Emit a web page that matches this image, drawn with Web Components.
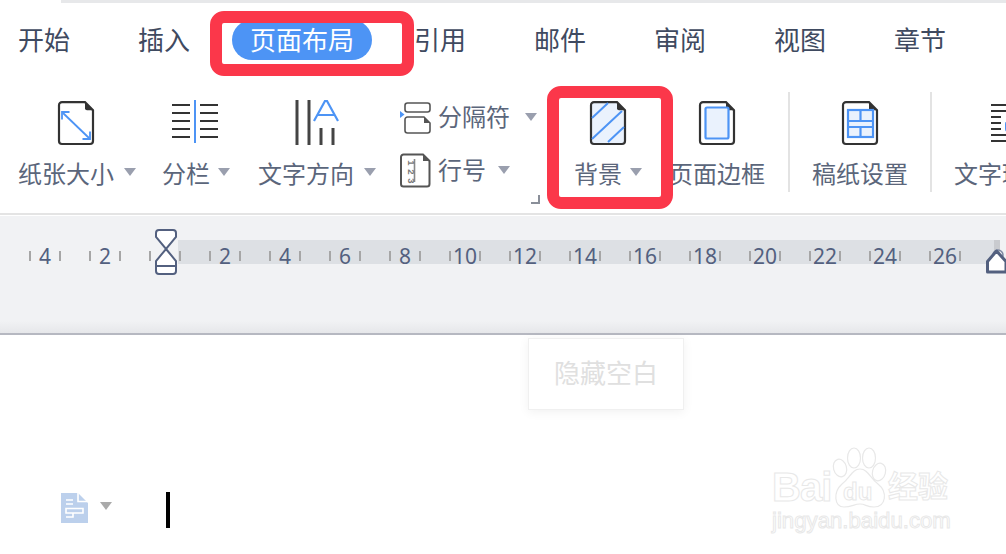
<!DOCTYPE html>
<html lang="zh">
<head>
<meta charset="utf-8">
<title>页面布局</title>
<style>
  html, body { margin: 0; background: #fff; }
  body { width: 1006px; height: 554px; overflow: hidden; position: relative; font-family: "Noto Sans CJK SC", "Noto Sans", sans-serif; }
</style>
</head>
<body>
<wps-app>
  <wps-tabs>
    <wps-tab>开始</wps-tab>
    <wps-tab>插入</wps-tab>
    <wps-tab active>页面布局</wps-tab>
    <wps-tab>引用</wps-tab>
    <wps-tab>邮件</wps-tab>
    <wps-tab>审阅</wps-tab>
    <wps-tab>视图</wps-tab>
    <wps-tab>章节</wps-tab>
  </wps-tabs>
  <wps-ribbon></wps-ribbon>
  <wps-ruler></wps-ruler>
  <wps-doc></wps-doc>
  <wps-mark style="left:210px;top:11px;width:204px;height:65px"></wps-mark>
  <wps-mark style="left:547px;top:86px;width:126px;height:123px"></wps-mark>
  <wps-watermark></wps-watermark>
</wps-app>

<script>
// icon paths, all drawn on the 36x44 sheet
const SHEET = `<path d="M4 1.2H27L35 9.2V40a3 3 0 0 1-3 3H4a3 3 0 0 1-3-3V4.2a3 3 0 0 1 3-3z" fill="FILL" stroke="#333" stroke-width="2.2"/><path d="M27 1.2L35 9.2H29a2 2 0 0 1-2-2z" fill="#333"/>`;
const page = (fill, inner) => `<svg width="38" height="46" viewBox="-1 -1 38 46">${SHEET.replace("FILL", fill)}${inner}</svg>`;
const digit = (n, y) => `<text transform="translate(4 ${y}) rotate(90)" font-size="9.500" text-anchor="middle" fill="#777" font-family="Liberation Sans" font-weight="700">${n}</text>`;

const ICONS = {
  size: page("#fff", `<g fill="none" stroke="#4d94f5" stroke-width="1.800"><path d="M5 12L31 37"/><path d="M4 18.500V11H11.500"/><path d="M32 30.500V38H24.500"/></g>`),
  cols: `<svg width="48" height="46" viewBox="0 0 48 46"><g stroke="#333" stroke-width="2"><path d="M1 5H19M1 13H19M1 21H19M1 29H19M1 37H19M29 5H47M29 13H47M29 21H47M29 29H47M29 37H47"/></g><path d="M24 0V43" stroke="#4d94f5" stroke-width="2"/></svg>`,
  dir: `<svg width="44" height="46" viewBox="0 0 44 46"><path d="M2 0V45M14 0V45M26 28V45M38 28V45" stroke="#444" stroke-width="3"/><path d="M19 21L30 1H32L43 21M22.500 15H39.500" fill="none" stroke="#4d94f5" stroke-width="2.200"/></svg>`,
  breaks: `<svg width="31" height="33" viewBox="0 0 31 33"><rect x="5" y="2" width="25" height="9" rx="2.500" fill="none" stroke="#555" stroke-width="1.600"/><path d="M7.500 16H24L30 22V29.500a2.500 2.500 0 0 1-2.500 2.500H7.500A2.500 2.500 0 0 1 5 29.500V18.500A2.500 2.500 0 0 1 7.500 16z" fill="none" stroke="#555" stroke-width="1.600"/><path d="M24 16L30 22H24z" fill="#555"/><path d="M0 10L4.500 13.500L0 17z" fill="#4d94f5"/></svg>`,
  lines: `<svg width="31" height="35" viewBox="0 0 31 35"><path d="M3.500 1.500H23L29.500 8V31a2.500 2.500 0 0 1-2.500 2.500H3.500A2.500 2.500 0 0 1 1 31V4A2.500 2.500 0 0 1 3.500 1.500z" fill="#fff" stroke="#555" stroke-width="2"/><path d="M23 1.500L29.500 8H23z" fill="#555"/><path d="M14.500 6V29" stroke="#888" stroke-width="1.600"/><g transform="translate(4 0)">${digit(1, 10)}${digit(2, 19)}${digit(3, 28)}</g></svg>`,
  bg: page("#eaf2fd", `<g stroke="#4d94f5" stroke-width="2" fill="none"><path d="M2 17L18 2M2 38L32 10M18 41L34 26"/></g>`),
  border: page("#fff", `<rect x="6.500" y="6.500" width="23" height="31" rx="1.500" fill="#eaf2fd" stroke="#4d94f5" stroke-width="2.200"/>`),
  grid: `<svg width="38" height="46" viewBox="-1 -1 38 46">${SHEET.replace("FILL", "#fff")}<rect x="6" y="9" width="25" height="27" fill="#eaf2fd" stroke="#4d94f5" stroke-width="2.200"/><path d="M6 20H31M6 26H31M18.500 9V20M18.500 26V36" stroke="#4d94f5" stroke-width="2.200"/></svg>`,
  wrap: `<svg width="36" height="46" viewBox="0 0 36 46"><path d="M7 5H36M7 11H36M7 17H17M7 23H17M7 29H17M7 35H36M7 41H36" stroke="#333" stroke-width="2"/><rect x="21" y="21" width="15" height="11" rx="3" fill="#4d94f5"/></svg>`,
};

class WpsApp extends HTMLElement {
  constructor() {
    super();
    this.attachShadow({ mode: "open" });
    this.shadowRoot.innerHTML = `
      <style>
        :host { display: flex; flex-direction: column; width: 1006px; height: 554px; position: relative; overflow: hidden; background: #fff; }
        .strip { height: 3px; margin-left: 61px; background: #e7e8ea; flex: none; }
      </style>
      <div class="strip"></div>
      <slot></slot>
    `;
  }
}

class WpsTabs extends HTMLElement {
  constructor() {
    super();
    this.attachShadow({ mode: "open" });
    this.shadowRoot.innerHTML = `
      <style>
        :host { display: flex; height: 74px; align-items: center; padding-left: 18px; flex: none; font-family: "Noto Sans CJK SC", sans-serif; }
      </style>
      <slot></slot>
    `;
  }
}

class WpsTab extends HTMLElement {
  constructor() {
    super();
    this.attachShadow({ mode: "open" });
    this.shadowRoot.innerHTML = `
      <style>
        :host { display: block; margin-right: 68px; font-size: 26px; line-height: 38px; padding-bottom: 2px; color: #3f4a60; white-space: nowrap; }
        :host([active]) { margin: 0 42px 0 -26px; padding: 0 18px 2px; border-radius: 20px; background: #4d94f5; color: #fff; }
      </style>
      <slot></slot>
    `;
  }
}

class WpsTool extends HTMLElement {
  constructor() {
    super();
    this.attachShadow({ mode: "open" });
    const caret = this.hasAttribute("caret") ? `<i></i>` : "";
    this.shadowRoot.innerHTML = `
      <style>
        :host { display: flex; flex-direction: column; align-items: flex-start; flex: none; }
        .icon { height: 46px; display: flex; justify-content: center; width: 100%; box-sizing: border-box; padding-right: var(--inset, 0); }
        .label { height: 30px; margin-top: 12px; display: flex; align-items: center; gap: var(--gap, 10px); font-size: 24px; line-height: 30px; color: #5b667b; white-space: nowrap; }
        i { width: 0; height: 0; border: 6px solid transparent; border-top: 8px solid #9a9fae; border-bottom: 0; margin-top: -3px; }
      </style>
      <div class="icon">${ICONS[this.getAttribute("icon")]}</div>
      <div class="label"><slot></slot>${caret}</div>
    `;
  }
}

class WpsSmallTool extends HTMLElement {
  constructor() {
    super();
    this.attachShadow({ mode: "open" });
    this.shadowRoot.innerHTML = `
      <style>
        :host { display: flex; align-items: center; font-size: 24px; color: #5b667b; white-space: nowrap; }
        .icon { width: 38px; display: flex; }
        span { line-height: 26px; padding-bottom: 4px; }
        i { width: 0; height: 0; border: 6px solid transparent; border-top: 8px solid #9a9fae; border-bottom: 0; margin: -1px 0 0 var(--caret-gap, 15px); }
      </style>
      <div class="icon">${ICONS[this.getAttribute("icon")]}</div>
      <span><slot></slot></span><i></i>
    `;
  }
}

class WpsRibbon extends HTMLElement {
  constructor() {
    super();
    this.attachShadow({ mode: "open" });
    this.shadowRoot.innerHTML = `
      <style>
        :host { display: flex; height: 136px; flex: none; padding: 23px 0 0 18px; box-sizing: border-box; overflow: hidden; position: relative; font-family: "Noto Sans CJK SC", sans-serif; }
        .stack { display: flex; flex-direction: column; gap: 19px; margin: 1px 0 0 24px; width: 137px; flex: none; }
        .sep { width: 2px; height: 100px; background: #e3e3e3; margin: -8px 22px 0 23px; flex: none; }
        .sep + wps-tool + .sep { margin-left: 22px; }
        .corner { position: absolute; left: 531px; top: 118px; width: 7px; height: 7px; border-right: 2px solid #8a8f99; border-bottom: 2px solid #8a8f99; }
      </style>
      <wps-tool icon="size" caret style="width:118px;--inset:2px">纸张大小</wps-tool>
      <wps-tool icon="cols" caret style="margin-left:26px;width:68px;--gap:8px;--inset:3px">分栏</wps-tool>
      <wps-tool icon="dir" caret style="margin-left:28px;width:118px">文字方向</wps-tool>
      <div class="stack">
        <wps-small-tool icon="breaks">分隔符</wps-small-tool>
        <wps-small-tool icon="lines" style="--caret-gap:12px">行号</wps-small-tool>
      </div>
      <wps-tool icon="bg" caret style="margin-left:37px;width:68px;--gap:8px">背景</wps-tool>
      <wps-tool icon="border" style="margin-left:27px;width:96px">页面边框</wps-tool>
      <div class="sep"></div>
      <wps-tool icon="grid" style="width:96px">稿纸设置</wps-tool>
      <div class="sep"></div>
      <wps-tool icon="wrap" style="width:96px">文字环绕</wps-tool>
      <div class="corner"></div>
    `;
  }
}

class WpsRuler extends HTMLElement {
  constructor() {
    super();
    this.attachShadow({ mode: "open" });
    const nums = [4, 2, "", 2, 4, 6, 8, 10, 12, 14, 16, 18, 20, 22, 24, 26];
    const cells = nums.map(n => `<div class="cell"><span>${n}</span></div>`).join("");
    this.shadowRoot.innerHTML = `
      <style>
        :host { display: block; height: 122px; flex: none; box-sizing: border-box; position: relative; overflow: hidden;
          border-top: 2px solid #e4e4e4; border-bottom: 2px solid #b6b8c1;
          background: linear-gradient(#fff 0 1px, #f1f2f4 1px, #f1f2f4 106px, #e6e7ea 118px); }
        .band { position: absolute; left: 178px; width: 816px; top: 25px; height: 24px; background: #dde0e4; border-right: 6px solid #c9cbcf; }
        .scale { position: absolute; left: 30px; top: 29px; display: flex; }
        .cell { width: 60px; flex: none; }
        .cell span { display: block; width: 30px; height: 24px; text-align: center; font: 21px/24px "Noto Sans", sans-serif; color: #53607f; position: relative; white-space: nowrap; }
        .cell span::before, .cell span::after { content: ""; position: absolute; top: 7px; width: 2px; height: 10px; background: #a6a6a6; }
        .cell span::before { left: -1px; }
        .cell span::after { right: -1px; }
        svg { position: absolute; }
      </style>
      <div class="band"></div>
      <div class="scale">${cells}</div>
      <svg style="left:154px;top:13px" width="24" height="48" viewBox="0 0 24 48" fill="none" stroke="#53607f" stroke-width="2">
        <path d="M5 2H19a3 3 0 0 1 3 3V9L12 21L2 9V5a3 3 0 0 1 3-3z" fill="#fff"/>
        <path d="M12 21L22 33V43a3 3 0 0 1-3 3H5a3 3 0 0 1-3-3V33z" fill="#fff"/>
        <path d="M2 38H22"/>
      </svg>
      <svg style="left:984px;top:28px" width="24" height="32" viewBox="0 0 24 32" fill="#fff" stroke="#53607f">
        <circle cx="14" cy="12" r="5" fill="none" stroke-width="1.500" stroke="#7d89a3"/>
        <path d="M12.500 8L22 18.500V29H3.500V18.500z" stroke-width="3" stroke-linejoin="round"/>
      </svg>
    `;
  }
}

class WpsDoc extends HTMLElement {
  constructor() {
    super();
    this.attachShadow({ mode: "open" });
    this.shadowRoot.innerHTML = `
      <style>
        :host { display: flex; align-items: flex-start; padding: 158px 0 0 61px; flex: 1; }
        .caret { width: 0; height: 0; border: 6px solid transparent; border-top: 8px solid #aaa; border-bottom: 0; margin: 9px 0 0 12px; }
        .cursor { width: 4px; height: 36px; background: #000; margin: -1px 0 0 54px; }
        .tip { position: absolute; left: 528px; top: 338px; width: 156px; height: 72px; box-sizing: border-box; background: #fff; padding-bottom: 4px;
          border: 1px solid #f0f0f0; box-shadow: 0 2px 10px rgba(0,0,0,.06); display: flex; align-items: center; justify-content: center;
          font: 26px/30px "Noto Sans CJK SC", sans-serif; color: #e0e0e0; }
      </style>
      <svg width="27" height="30" viewBox="0 0 27 30">
        <path d="M0 0H17L27 10V30H0z" fill="#bcd0ec"/>
        <path d="M17 0V8.500H27M5 7H12M5 11H12M5 15.500H22V20H5zM12 20V24H5" fill="none" stroke="#fff" stroke-width="1.600"/>
      </svg>
      <div class="caret"></div>
      <div class="cursor"></div>
      <div class="tip">隐藏空白</div>
    `;
  }
}

class WpsMark extends HTMLElement {
  constructor() {
    super();
    this.attachShadow({ mode: "open" });
    this.shadowRoot.innerHTML = `
      <style>
        :host { position: absolute; display: block; box-sizing: border-box; border: 12px solid #fb374a; border-radius: 14px; }
      </style>
    `;
  }
}

class WpsWatermark extends HTMLElement {
  constructor() {
    super();
    this.attachShadow({ mode: "open" });
    this.shadowRoot.innerHTML = `
      <style>
        :host { position: absolute; left: 772px; top: 444px; width: 182px; height: 92px; display: block; color: #fff; -webkit-text-stroke: 1px #e8e8e8; pointer-events: none; }
        div { position: absolute; white-space: nowrap; line-height: 1; }
        .bai { left: 0; top: 23px; font: 700 40px/1 "Liberation Sans", sans-serif; letter-spacing: -1px; }
        .du { left: 71px; top: 36px; font: 700 24px/1 "Liberation Sans", sans-serif; }
        .jy { left: 116px; top: 25px; font: 700 30px/1 "Noto Sans CJK SC", sans-serif; }
        .url { left: 0; top: 66px; font: 22.200px/1 "Liberation Sans", sans-serif; }
        svg { position: absolute; left: 60px; top: 0; }
      </style>
      <svg width="72" height="66" viewBox="0 0 72 66" fill="#fff" stroke="#e8e8e8" stroke-width="1.200">
        <ellipse cx="8" cy="24" rx="6.500" ry="9" transform="rotate(-15 8 24)"/>
        <ellipse cx="22" cy="14" rx="6.500" ry="10"/>
        <ellipse cx="37" cy="14" rx="6.500" ry="10"/>
        <ellipse cx="47" cy="28" rx="6.500" ry="9" transform="rotate(15 47 28)"/>
        <path d="M28 25C36 25 38 34 46 40C56 48 54 63 42 63C34 63 34 60 28 60C22 60 20 63 12 63C2 63 1 48 10 40C18 34 20 25 28 25z"/>
      </svg>
      <div class="bai">Bai</div>
      <div class="du">du</div>
      <div class="jy">经验</div>
      <div class="url">jingyan.baidu.com</div>
    `;
  }
}

customElements.define("wps-app", WpsApp);
customElements.define("wps-tabs", WpsTabs);
customElements.define("wps-tab", WpsTab);
customElements.define("wps-tool", WpsTool);
customElements.define("wps-small-tool", WpsSmallTool);
customElements.define("wps-ribbon", WpsRibbon);
customElements.define("wps-ruler", WpsRuler);
customElements.define("wps-doc", WpsDoc);
customElements.define("wps-mark", WpsMark);
customElements.define("wps-watermark", WpsWatermark);
</script>
</body>
</html>
